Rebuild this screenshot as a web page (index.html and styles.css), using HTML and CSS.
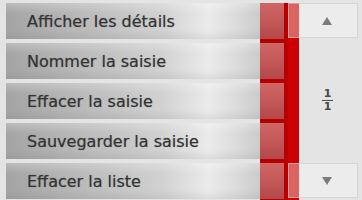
FILE: index.html
```html
<!DOCTYPE html>
<html>
<head>
  <title>Options</title>
  <link rel="stylesheet" href="styles.css">
</head>
<body>
  <div class="screen">
    <div class="list">
      <div class="row"><span class="label">Afficher les détails</span><span class="tab"></span></div>
      <div class="row"><span class="label">Nommer la saisie</span><span class="tab"></span></div>
      <div class="row"><span class="label">Effacer la saisie</span><span class="tab"></span></div>
      <div class="row"><span class="label">Sauvegarder la saisie</span><span class="tab"></span></div>
      <div class="row"><span class="label">Effacer la liste</span><span class="tab"></span></div>
    </div>
    <div class="track"></div>
    <div class="side">
      <div class="arrow"><span class="tri up"></span></div>
      <div class="page">
        <span class="num">1</span>
        <span class="den">1</span>
      </div>
      <div class="arrow"><span class="tri down"></span></div>
    </div>
  </div>
</body>
</html>
```

FILE: styles.css
```css
body {
  margin: 0;
  padding: 0;
  background: #e4e4e4;
  font-family: "DejaVu Sans", Verdana, sans-serif;
  overflow: hidden;
}

.screen {
  display: flex;
  height: 200px;
  padding: 3px 0 0 6px;
  box-sizing: border-box;
}

.list {
  width: 278px;
  display: flex;
  flex-direction: column;
  gap: 4px;
  background: linear-gradient(90deg, transparent 254px, #b50000 254px);
}

.row {
  display: flex;
  height: 36px;
  flex: none;
}

.label {
  flex: 1;
  display: flex;
  align-items: center;
  padding-left: 21px;
  font-size: 16px;
  color: #333;
  text-shadow: 0 0 1px rgba(40, 40, 40, .45);
  white-space: nowrap;
  background:
    linear-gradient(180deg, rgba(255,255,255,.25) 0%, rgba(255,255,255,0) 30%, rgba(0,0,0,0) 75%, rgba(0,0,0,.06) 100%),
    linear-gradient(90deg, #a4a4a4 0%, #bababa 30%, #d2d2d2 62%, #ebebeb 80%, #dcdcdc 90%, #cbcbcb 100%);
}

.tab {
  width: 24px;
  background: linear-gradient(180deg, #cf6666 0%, #c45858 50%, #b44848 100%);
}

.track {
  width: 15px;
  background: #cc0000;
  box-shadow: inset 4px 0 0 #b80000;
}

.side {
  width: 63px;
  display: flex;
  flex-direction: column;
  justify-content: space-between;
  padding-bottom: 2px;
}

.arrow {
  height: 35px;
  margin-left: -11px;
  margin-right: 4px;
  background: rgba(248, 248, 248, .4);
  border: 1px solid rgba(200, 200, 200, .6);
  box-sizing: border-box;
  display: flex;
  align-items: center;
  justify-content: center;
  padding-left: 8px;
}

.tri {
  width: 0;
  height: 0;
  border-left: 5.5px solid transparent;
  border-right: 5.5px solid transparent;
}

.tri.up {
  border-bottom: 8px solid #7c7c7c;
}

.tri.down {
  border-top: 8px solid #7c7c7c;
}

.page {
  display: flex;
  flex-direction: column;
  align-items: center;
  font-size: 11px;
  font-weight: bold;
  color: #4a4a4a;
  line-height: 10px;
  padding-right: 6px;
}

.num {
  border-bottom: 1px solid #4a4a4a;
  padding: 0 2px 1px;
}

.den {
  padding-top: 1px;
}
```
